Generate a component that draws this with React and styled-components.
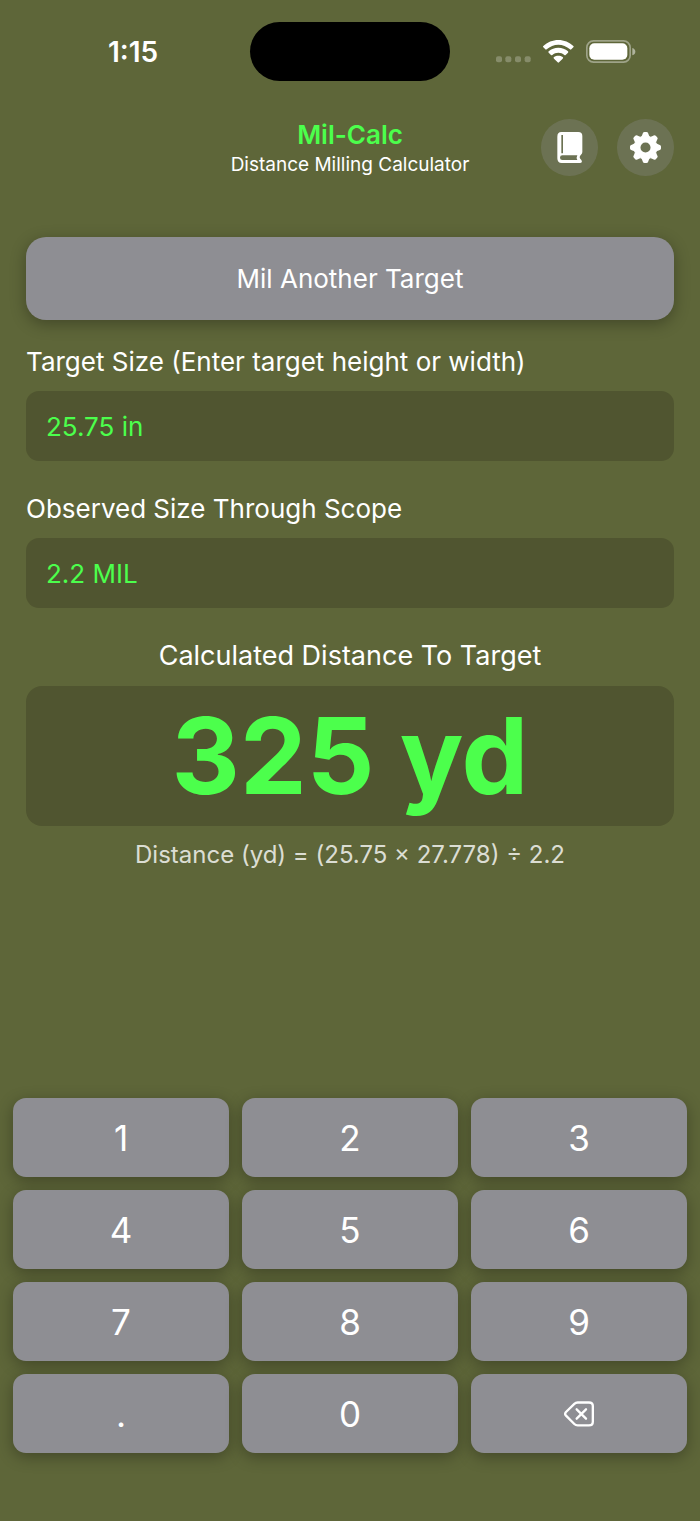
import React, { useState } from "react";
import styled, { createGlobalStyle } from "styled-components";

const GlobalStyle = createGlobalStyle`
  *, *::before, *::after { box-sizing: border-box; }
  body {
    margin: 0;
    background: #5e6639;
    color: #fff;
    font-family: Inter, "Liberation Sans", sans-serif;
  }
  button, input { font: inherit; color: inherit; border: 0; margin: 0; }
  button { cursor: pointer; padding: 0; }
`;

const Screen = styled.div`
  min-height: 100vh;
  display: flex;
  flex-direction: column;
  padding-top: 22px;
`;

const StatusBar = styled.div`
  display: grid;
  grid-template-columns: 1fr 200px 1fr;
  align-items: center;
`;

const Clock = styled.time`
  padding-left: 16px;
  text-align: center;
  font-size: 28px;
  font-weight: 600;
  line-height: 34px;
`;

const Island = styled.div`
  height: 59px;
  border-radius: 30px;
  background: #000;
`;

const Indicators = styled.div`
  display: flex;
  justify-content: center;
  gap: 12px;
  padding-right: 18px;
`;

const Header = styled.header`
  display: grid;
  grid-template-columns: 1fr auto 1fr;
  align-items: start;
  margin-top: 38px;
  padding: 0 26px;
`;

const Titles = styled.div`
  grid-column: 2;
  text-align: center;
`;

const Title = styled.h1`
  margin: 0;
  color: #4cff4c;
  font-size: 26px;
  font-weight: 600;
  line-height: 31px;
`;

const Subtitle = styled.p`
  margin: 0;
  font-size: 19px;
  line-height: 30px;
`;

const Actions = styled.div`
  display: flex;
  justify-content: flex-end;
  gap: 19px;
`;

const RoundButton = styled.button`
  display: grid;
  place-items: center;
  width: 57px;
  height: 57px;
  border-radius: 50%;
  background: rgba(142, 142, 147, 0.3);
`;

const Main = styled.main`
  display: flex;
  flex-direction: column;
  padding: 57px 26px 0;
`;

const ResetButton = styled.button`
  height: 83px;
  border-radius: 20px;
  background: #8e8e93;
  font-size: 26px;
  box-shadow: 0 4px 16px rgba(0, 0, 0, 0.3);
`;

const Label = styled.label`
  margin-top: ${(p) => p.$gap}px;
  font-size: 26px;
  line-height: 34px;
`;

const Field = styled.input`
  width: 100%;
  height: 70px;
  margin-top: 12px;
  padding: 0 20px;
  border-radius: 13px;
  outline: none;
  background: #505530;
  color: #4cff4c;
  font-size: 26px;
`;

const ResultTitle = styled.h2`
  margin: 31px 0 0;
  text-align: center;
  font-size: 27px;
  font-weight: 400;
  line-height: 34px;
`;

const Result = styled.output`
  display: flex;
  align-items: center;
  justify-content: center;
  height: 140px;
  margin-top: 13px;
  border-radius: 16px;
  background: #505530;
  color: #4cff4c;
  font-size: 106px;
  font-weight: 700;
  line-height: 140px;
`;

const Formula = styled.p`
  margin: 12px 0 0;
  text-align: center;
  color: rgba(255, 255, 255, 0.8);
  font-size: 24px;
  line-height: 34px;
`;

const Keypad = styled.div`
  display: grid;
  grid-template-columns: repeat(3, 1fr);
  gap: 13px;
  margin-top: auto;
  padding: 32px 13px 68px;
`;

const Key = styled.button`
  display: grid;
  place-items: center;
  height: 79px;
  border-radius: 13px;
  background: #8e8e93;
  font-size: 35px;
  box-shadow: 0 4px 16px rgba(0, 0, 0, 0.3);
`;

const SignalIcon = () => (
  <svg width="35" height="23" viewBox="0 0 105 69" fill="#fff" fillOpacity="0.25" aria-hidden="true">
    {[0, 28, 57, 86].map((x) => (
      <rect key={x} x={x} y="49" width="18" height="18" rx="6" />
    ))}
  </svg>
);

const WifiIcon = () => (
  <svg width="31" height="23" viewBox="0 0 93 69" fill="#fff" aria-hidden="true">
    <path d="M46 0C63 0 79 7 91 18q2 2 0 4l-6 6q-2 2-4 0C71 19 59 14 46 14S21 19 11 28q-2 2-4 0l-6-6q-2-2 0-4C13 7 29 0 46 0z" />
    <path d="M46 23c11 0 21 4 29 11q2 2 0 4l-7 7q-2 2-4 0c-5-5-11-7-18-7s-13 2-18 7q-2 2-4 0l-7-7q-2-2 0-4c8-7 18-11 29-11z" />
    <path d="M46 47c5 0 9 1 13 4q3 2 0 5L48 67q-2 2-4 0L33 56q-3-3 0-5c4-3 8-4 13-4z" />
  </svg>
);

const BatteryIcon = () => (
  <svg width="50" height="23" viewBox="0 0 150 69" aria-hidden="true">
    <rect x="2.5" y="2.5" width="130" height="64" rx="20" fill="none" stroke="#fff" strokeOpacity="0.4" strokeWidth="5" />
    <rect x="10" y="10" width="114" height="49" rx="15" fill="#fff" />
    <path d="M139 24q9 3 9 11t-9 11z" fill="#fff" fillOpacity="0.5" />
  </svg>
);

const BookIcon = () => (
  <svg width="26" height="31" viewBox="0 0 78 93" fill="#fff" fillRule="evenodd" aria-hidden="true">
    <path d="M13 0H64Q76 0 76 12V60Q76 65 72 68Q68 71 68 76Q68 80 73 84Q76 88 74 91Q73 93 69 93H14Q1 93 1 79V14Q1 0 13 0ZM13 9V64H18V9ZM16 70Q9 70 9 77Q9 84 16 84H61Q57 77 61 70Z" />
  </svg>
);

const GearIcon = () => (
  <svg width="31" height="31" viewBox="-46 -46 92 92" aria-hidden="true">
    <circle r="24.5" fill="none" stroke="#fff" strokeWidth="19" />
    {[0, 45, 90, 135, 180, 225, 270, 315].map((angle) => (
      <path
        key={angle}
        transform={`rotate(${angle})`}
        d="M-14-31Q-10-34-9-39Q-8-46-3-46H3Q8-46 9-39Q10-34 14-31Z"
        fill="#fff"
      />
    ))}
  </svg>
);

const DeleteIcon = () => (
  <svg width="30" height="26" viewBox="0 0 90 78" fill="none" stroke="#fff" strokeWidth="7" strokeLinecap="round" strokeLinejoin="round" aria-hidden="true">
    <path d="M41 4.500H75Q86.500 4.500 86.500 15V62Q86.500 73 75 73H41Q35 73 31 69L6 44Q1 39 6 33L31 8.500Q35 4.500 41 4.500Z" />
    <path d="M38 25L66 53M66 25L38 53" />
  </svg>
);

const KEYS = ["1", "2", "3", "4", "5", "6", "7", "8", "9", ".", "0"];

export default function App() {
  const [values, setValues] = useState({ target: "25.75", observed: "2.2" });
  const [active, setActive] = useState("target");

  const update = (change) => setValues((v) => ({ ...v, [active]: change(v[active]) }));
  const press = (key) => update((v) => (key === "." && v.includes(".") ? v : v + key));
  const erase = () => update((v) => v.slice(0, -1));
  const reset = () => {
    setValues({ target: "", observed: "" });
    setActive("target");
  };

  const { target, observed } = values;
  const distance = Math.round((Number(target) * 27.778) / Number(observed));
  const ready = Number.isFinite(distance) && distance > 0;

  return (
    <>
      <GlobalStyle />
      <Screen>
        <StatusBar>
          <Clock>1:15</Clock>
          <Island />
          <Indicators>
            <SignalIcon />
            <WifiIcon />
            <BatteryIcon />
          </Indicators>
        </StatusBar>

        <Header>
          <Titles>
            <Title>Mil-Calc</Title>
            <Subtitle>Distance Milling Calculator</Subtitle>
          </Titles>
          <Actions>
            <RoundButton type="button" aria-label="Guide">
              <BookIcon />
            </RoundButton>
            <RoundButton type="button" aria-label="Settings">
              <GearIcon />
            </RoundButton>
          </Actions>
        </Header>

        <Main>
          <ResetButton type="button" onClick={reset}>Mil Another Target</ResetButton>

          <Label htmlFor="target" $gap={25}>Target Size (Enter target height or width)</Label>
          <Field
            id="target"
            readOnly
            value={target && `${target} in`}
            onFocus={() => setActive("target")}
          />

          <Label htmlFor="observed" $gap={31}>Observed Size Through Scope</Label>
          <Field
            id="observed"
            readOnly
            value={observed && `${observed} MIL`}
            onFocus={() => setActive("observed")}
          />

          <ResultTitle>Calculated Distance To Target</ResultTitle>
          <Result htmlFor="target observed">{ready ? `${distance} yd` : ""}</Result>
          <Formula>{ready ? `Distance (yd) = (${target} × 27.778) ÷ ${observed}` : ""}</Formula>
        </Main>

        <Keypad>
          {KEYS.map((key) => (
            <Key key={key} type="button" onClick={() => press(key)}>{key}</Key>
          ))}
          <Key type="button" aria-label="Delete" onClick={erase}>
            <DeleteIcon />
          </Key>
        </Keypad>
      </Screen>
    </>
  );
}
